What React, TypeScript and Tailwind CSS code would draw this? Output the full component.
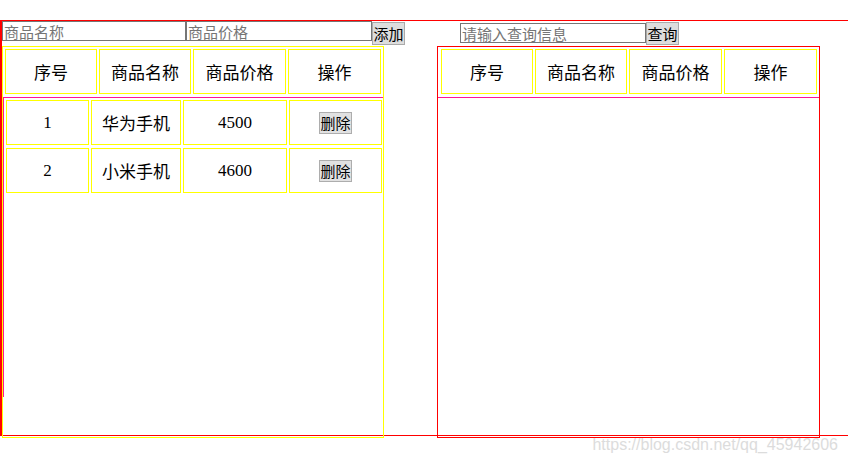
import React from "react";

const cjk = { fontFamily: '"Noto Sans CJK SC", "Liberation Sans", sans-serif' };
const serif = { fontFamily: '"Liberation Serif", "Noto Sans CJK SC", serif' };

const goods = [
  { id: 1, name: "华为手机", price: 4500 },
  { id: 2, name: "小米手机", price: 4600 },
];

// yellow box used by every table cell
const cell =
  "h-[45px] border border-solid border-t-[#ffff00] border-r-[#ffff00] border-b-[#ffff00] border-l-[#ffff00] flex items-center justify-center text-[17px] text-black";

function HeadRow() {
  return (
    <div className="flex gap-[2px]" style={cjk}>
      <div className={`${cell} w-[92px]`}>序号</div>
      <div className={`${cell} w-[92px]`}>商品名称</div>
      <div className={`${cell} w-[93px]`}>商品价格</div>
      <div className={`${cell} w-[93px]`}>操作</div>
    </div>
  );
}

function DelButton() {
  return (
    <button
      className="w-[33px] h-[22px] bg-[#e1e1e1] border border-solid border-[#adadad] text-[15px] leading-none text-black"
      style={cjk}
    >
      删除
    </button>
  );
}

export default function App() {
  return (
    <div className="relative w-[848px] h-[462px] bg-white overflow-hidden">
      <div className="mt-[20px] h-[416px] border-t border-b border-l-2 border-solid border-t-[#ff0000] border-b-[#ff0000] border-l-[#ff0000] flex">
        {/* left: add form + list */}
        <div className="w-[435px] shrink-0">
          <div className="h-[25px] flex items-start">
            <input
              className="w-[184px] h-[20px] border border-solid border-[#767676] px-[1px] text-[15px] leading-none placeholder:text-[#757575] outline-none"
              style={cjk}
              placeholder="商品名称"
            />
            <input
              className="w-[186px] h-[20px] border border-solid border-[#767676] px-[1px] text-[15px] leading-none placeholder:text-[#757575] outline-none"
              style={cjk}
              placeholder="商品价格"
            />
            <button
              className="mt-[1px] w-[33px] h-[23px] bg-[#dddddd] border border-solid border-[#aaaaaa] text-[15px] leading-none text-black"
              style={cjk}
            >
              添加
            </button>
          </div>
          <div className="w-[382px] h-[392px] border border-solid border-t-[#ffff00] border-r-[#ffff00] border-b-[#ffff00] border-l-[#ffff00] pt-[2px]">
            <div className="pl-[2px]">
              <HeadRow />
            </div>
            <div className="mt-[3px] h-[300px] border-t border-l border-solid border-t-[#ff1493] border-l-[#ff1493] pt-[2px] pl-[2px] flex flex-col gap-[3px]">
              {goods.map((g) => (
                <div key={g.id} className="flex gap-[2px]">
                  <div className={`${cell} w-[83px]`} style={serif}>{g.id}</div>
                  <div className={`${cell} w-[90px]`} style={cjk}>{g.name}</div>
                  <div className={`${cell} w-[104px]`} style={serif}>{g.price}</div>
                  <div className={`${cell} w-[93px]`}>
                    <DelButton />
                  </div>
                </div>
              ))}
            </div>
          </div>
        </div>

        {/* right: search + result */}
        <div className="w-[383px] shrink-0">
          <div className="h-[25px] flex items-start">
            <input
              className="ml-[23px] mt-[2px] w-[186px] h-[20px] border border-solid border-[#767676] px-[1px] text-[15px] leading-none placeholder:text-[#757575] outline-none"
              style={cjk}
              placeholder="请输入查询信息"
            />
            <button
              className="mt-[1px] w-[33px] h-[23px] bg-[#dddddd] border border-solid border-[#aaaaaa] text-[15px] leading-none text-black"
              style={cjk}
            >
              查询
            </button>
          </div>
          <div className="w-[383px] h-[392px] border border-solid border-t-[#ff0000] border-r-[#ff0000] border-b-[#ff0000] border-l-[#ff0000] pt-[2px]">
            <div className="pl-[3px]">
              <HeadRow />
            </div>
            <div className="mt-[3px] border-t border-solid border-t-[#ff1493]" />
          </div>
        </div>
      </div>

      <div
        className="absolute right-[10px] top-[433px] text-[16px] text-[#dcdcdc]"
        style={{ fontFamily: '"Liberation Sans", Arial, sans-serif' }}
      >
        https://blog.csdn.net/qq_45942606
      </div>
    </div>
  );
}
